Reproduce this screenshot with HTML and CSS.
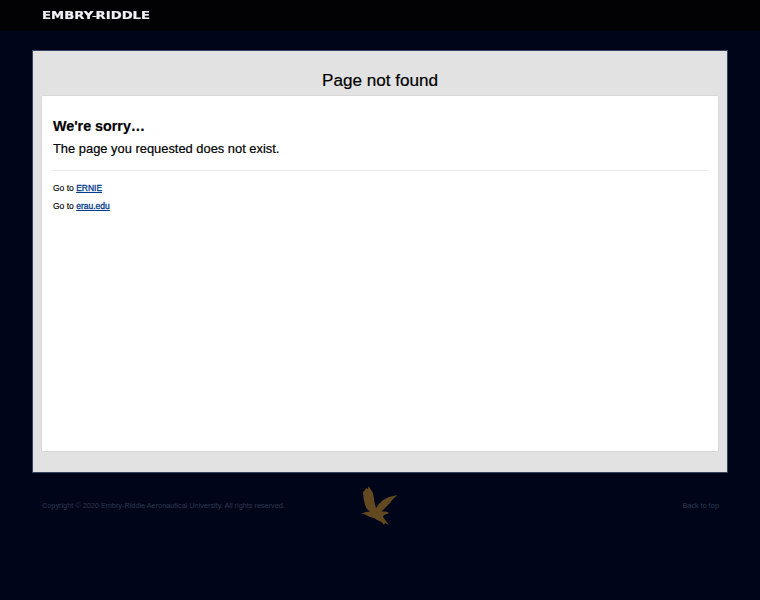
FILE: index.html
```html
<!DOCTYPE html>
<html lang="en">
<head>
    <meta charset="UTF-8">
    <meta name="viewport" content="width=device-width, initial-scale=1.0">
    <title>Page not found</title>
    <link rel="stylesheet" href="styles.css">
</head>
<body>
    <header class="top-bar">
        <a class="logo" href="#">EMBRY<span class="logo-dash">-</span>RIDDLE</a>
    </header>

    <main class="panel">
        <h1 class="panel-title">Page not found</h1>
        <div class="card">
            <h2 class="sorry">We're sorry…</h2>
            <p class="message">The page you requested does not exist.</p>
            <hr class="divider">
            <p class="go-to">Go to <a href="#">ERNIE</a></p>
            <p class="go-to">Go to <a href="#">erau.edu</a></p>
        </div>
    </main>

    <footer class="footer">
        <span class="footer-text">Copyright © 2020 Embry-Riddle Aeronautical University. All rights reserved.</span>
        <svg class="eagle" viewBox="0 0 40 44" width="40" height="44" aria-hidden="true">
            <path d="M3 8 L5 6 L6 4 L8 5 L8.5 2 L10.5 5 L12.5 8 L13.5 12 L14.5 18 L16 24 L19 20 L23 16 L29 13 L37.5 11 L33 15 L30 19 L26 23 L21.5 27.5 L26 27.5 L29.5 29 L24 31 L23 33 L26 37 L29 41 L25 39 L24 41 L21.5 38 L17 36 L14 34 L10 33 L5 30.5 L1.5 29.5 L6 28 L10 27.5 L7 25 L5 21 L3.5 14 Z"/>
        </svg>
        <a class="footer-text back-top" href="#">Back to top</a>
    </footer>
</body>
</html>
```

FILE: styles.css
```css
body {
    margin: 0;
    background-color: #000619;
    font-family: "Liberation Sans", Arial, sans-serif;
    color: #000;
}

.top-bar {
    height: 31px;
    background-color: #020205;
    display: flex;
    align-items: center;
    padding-left: 42px;
}

.logo {
    display: inline-block;
    font-family: "DejaVu Sans", sans-serif;
    font-size: 11px;
    font-weight: bold;
    color: #f2f2f6;
    text-decoration: none;
    white-space: nowrap;
    transform: scaleX(1.2);
    transform-origin: left center;
    -webkit-text-stroke: 0.2px #f2f2f6;
}

.logo-dash {
    margin: 0 -1px;
    font-weight: normal;
}

.panel {
    margin: 19px 32px 0;
    height: 423px;
    box-sizing: border-box;
    background-color: #e2e2e2;
    border: 1px solid #35435f;
    padding: 0 8px;
}

.panel-title {
    margin: 0;
    height: 44px;
    box-sizing: border-box;
    padding-top: 19px;
    font-size: 17.1px;
    line-height: 21px;
    font-weight: normal;
    text-align: center;
    color: #000;
    -webkit-text-stroke: 0.2px #000;
}

.card {
    height: 357px;
    box-sizing: border-box;
    background-color: #fff;
    border: 1px solid #d8d8d8;
    border-radius: 2px;
    padding: 21px 11px 0;
}

.sorry {
    margin: 0;
    font-size: 14.3px;
    line-height: 18px;
    font-weight: bold;
    -webkit-text-stroke: 0.2px #000;
}

.message {
    margin: 5px 0 0;
    font-size: 12.9px;
    line-height: 18px;
    -webkit-text-stroke: 0.2px #000;
}

.divider {
    margin: 12px 0 12px;
    border: none;
    border-top: 1px solid #e8e8e8;
}

.go-to {
    margin: 0 0 8px;
    font-size: 8.5px;
    line-height: 10px;
    -webkit-text-stroke: 0.15px #111;
}

.go-to a {
    color: #003a8c;
    -webkit-text-stroke: 0.3px #003a8c;
}

.footer {
    margin: 11px 41px 0 42px;
    height: 44px;
    box-sizing: border-box;
    padding-bottom: 2px;
    display: flex;
    align-items: center;
    justify-content: space-between;
    position: relative;
}

.footer-text {
    font-size: 7.3px;
    color: #2f374f;
    text-decoration: none;
}

.eagle {
    position: absolute;
    left: 318px;
    top: 0;
    fill: #63491f;
    filter: blur(0.5px);
}
```
